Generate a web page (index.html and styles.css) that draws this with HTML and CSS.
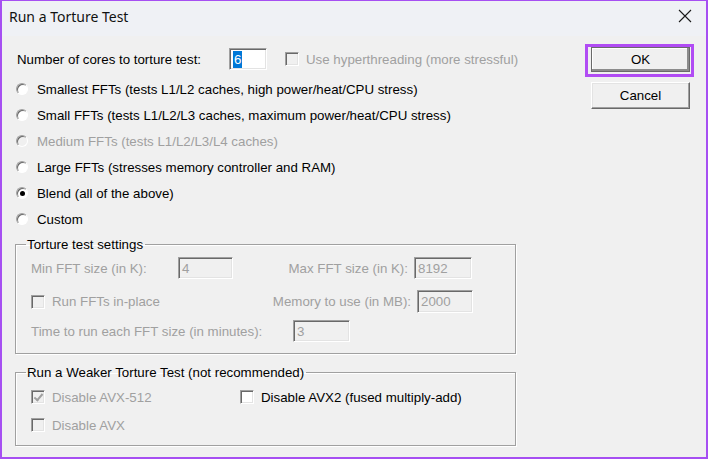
FILE: index.html
```html
<!DOCTYPE html>
<html lang="en">
<head>
  <meta charset="UTF-8">
  <title>Run a Torture Test</title>
  <link rel="stylesheet" href="styles.css">
</head>
<body>
  <div class="window">
    <div class="titlebar">
      <span class="title">Run a Torture Test</span>
      <svg class="close" width="14" height="14" viewBox="0 0 14 14">
        <path d="M1 1 L13 13 M13 1 L1 13" stroke="#1a1a1a" stroke-width="1.1" fill="none"/>
      </svg>
    </div>

    <div class="dialog">
      <div class="main">
        <div class="row cores">
          <span class="cores-label">Number of cores to torture test:</span>
          <span class="field cores-field"><span class="hl">6</span></span>
          <span class="check off ht"></span>
          <span class="dim">Use hyperthreading (more stressful)</span>
        </div>

        <div class="row radio-row"><span class="radio"></span><span>Smallest FFTs (tests L1/L2 caches, high power/heat/CPU stress)</span></div>
        <div class="row radio-row"><span class="radio"></span><span>Small FFTs (tests L1/L2/L3 caches, maximum power/heat/CPU stress)</span></div>
        <div class="row radio-row"><span class="radio off"></span><span class="dim">Medium FFTs (tests L1/L2/L3/L4 caches)</span></div>
        <div class="row radio-row"><span class="radio"></span><span>Large FFTs (stresses memory controller and RAM)</span></div>
        <div class="row radio-row"><span class="radio on"></span><span>Blend (all of the above)</span></div>
        <div class="row radio-row"><span class="radio"></span><span>Custom</span></div>

        <fieldset class="group settings">
          <legend>Torture test settings</legend>
          <div class="set-row row-a">
            <span class="dim w147">Min FFT size (in K):</span>
            <span class="field off w55">4</span>
            <span class="dim right w181">Max FFT size (in K):</span>
            <span class="field off w58">8192</span>
          </div>
          <div class="set-row row-b">
            <span class="w147 box-label"><span class="check off"></span><span class="dim">Run FFTs in-place</span></span>
            <span class="dim right w239">Memory to use (in MB):</span>
            <span class="field off w56 tall">2000</span>
          </div>
          <div class="set-row row-c">
            <span class="dim w262">Time to run each FFT size (in minutes):</span>
            <span class="field off w57">3</span>
          </div>
        </fieldset>

        <fieldset class="group weaker">
          <legend>Run a Weaker Torture Test (not recommended)</legend>
          <div class="weak-row">
            <span class="box-label w209"><span class="check off checked"></span><span class="dim">Disable AVX-512</span></span>
            <span class="box-label"><span class="check"></span><span>Disable AVX2 (fused multiply-add)</span></span>
          </div>
          <div class="weak-row">
            <span class="box-label"><span class="check off"></span><span class="dim">Disable AVX</span></span>
          </div>
        </fieldset>
      </div>

      <div class="buttons">
        <span class="focus"><button class="btn default">OK</button></span>
        <button class="btn">Cancel</button>
      </div>
    </div>
  </div>
</body>
</html>
```

FILE: styles.css
```css
body {
  margin: 0;
  font-family: 'Liberation Sans', Arial, sans-serif;
  font-size: 13.3px;
  color: #000;
}

.window {
  width: 708px;
  height: 459px;
  box-sizing: border-box;
  border: 2px solid #a64ff2;
  border-top-width: 1px;
  background-color: #f0f0f0;
  overflow: hidden;
}

.titlebar {
  height: 35px;
  background-color: #eff1f5;
  display: flex;
  align-items: center;
  justify-content: space-between;
  padding: 0 14px 0 7px;
}

.title {
  font-family: 'Noto Sans', sans-serif;
  font-size: 14px;
  color: #111;
  margin-top: -5px;
}

.close {
  margin-top: -6px;
}

.dialog {
  display: flex;
  padding: 11px 12px 0 13px;
}

.main {
  width: 501px;
  flex-shrink: 0;
}

.row {
  display: flex;
  align-items: center;
  white-space: nowrap;
}

.cores {
  height: 22px;
  margin-top: 1px;
  margin-left: 2px;
  margin-bottom: 6px;
}

.cores-label {
  width: 212px;
  flex-shrink: 0;
}

.cores-field {
  width: 38px;
  height: 22px;
  background-color: #fff;
  padding-left: 3px;
}

.hl {
  background-color: #0078d7;
  color: #fff;
  line-height: 17px;
  padding: 0 1px;
}

.ht {
  margin-left: 18px;
  margin-right: 7px;
}

.radio-row {
  height: 26px;
  padding-left: 1px;
}

.radio {
  width: 12px;
  height: 12px;
  box-sizing: border-box;
  border-radius: 50%;
  border: 1px solid;
  border-color: #a0a0a0 #fff #fff #a0a0a0;
  box-shadow: inset 1px 1px 0 #696969;
  background-color: #fff;
  margin-right: 9px;
  flex-shrink: 0;
  position: relative;
}

.radio.off {
  background-color: #f0f0f0;
}

.radio.on::after {
  content: '';
  position: absolute;
  left: 2.5px;
  top: 2.5px;
  width: 5px;
  height: 5px;
  border-radius: 50%;
  background-color: #000;
}

.dim {
  color: #a0a0a0;
}

.check {
  display: inline-block;
  width: 14px;
  height: 14px;
  box-sizing: border-box;
  border: 1px solid;
  border-color: #a0a0a0 #fff #fff #a0a0a0;
  box-shadow: inset 1px 1px 0 #696969, inset -1px -1px 0 #e3e3e3;
  background-color: #fff;
  flex-shrink: 0;
  position: relative;
}

.check.off {
  background-color: #f0f0f0;
}

.check.checked::after {
  content: '';
  position: absolute;
  left: 4px;
  top: 1px;
  width: 3px;
  height: 7px;
  border: solid #a0a0a0;
  border-width: 0 2px 2px 0;
  transform: rotate(40deg);
}

.field {
  display: inline-flex;
  align-items: center;
  box-sizing: border-box;
  height: 22px;
  border: 1px solid;
  border-color: #a0a0a0 #fff #fff #a0a0a0;
  box-shadow: inset 1px 1px 0 #696969, inset -1px -1px 0 #e3e3e3;
  padding-left: 3px;
  flex-shrink: 0;
}

.field.off {
  background-color: #f0f0f0;
  color: #a0a0a0;
}

.field.tall {
  height: 23px;
}

.group {
  margin: 0;
  padding: 0 0 0 15px;
  border: 1px solid #a0a0a0;
  box-shadow: 1px 1px 0 #fff, inset 1px 1px 0 #fff;
}

.group legend {
  margin-left: -5px;
  padding: 0 2px 0 1px;
  line-height: 15px;
}

.settings {
  margin-top: 5px;
  height: 117px;
  box-sizing: border-box;
}

.set-row {
  display: flex;
  align-items: center;
  white-space: nowrap;
}

.row-a {
  margin-top: 5px;
}

.row-b {
  margin-top: 11px;
}

.row-c {
  margin-top: 7px;
}

.w147 { width: 147px; }
.w55 { width: 55px; }
.w181 { width: 181px; }
.w58 { width: 58px; }
.w239 { width: 239px; }
.w56 { width: 56px; }
.w262 { width: 262px; }
.w57 { width: 57px; }
.w209 { width: 209px; }

.right {
  text-align: right;
  padding-right: 6px;
  box-sizing: border-box;
}

.box-label {
  display: flex;
  align-items: center;
  gap: 7px;
  white-space: nowrap;
}

.weaker {
  margin-top: 11px;
  height: 81px;
  box-sizing: border-box;
}

.weak-row {
  display: flex;
  align-items: center;
  height: 24px;
}

.weak-row + .weak-row {
  margin-top: 4px;
}

.weaker .weak-row:first-of-type {
  margin-top: 5px;
}

.buttons {
  margin-left: auto;
  margin-top: -3px;
  display: flex;
  flex-direction: column;
  align-items: flex-end;
}

.focus {
  display: block;
  border: 3px solid #b14cf4;
  padding: 0 1px 2px 3px;
}

.btn {
  display: block;
  width: 99px;
  height: 26px;
  font-family: 'Liberation Sans', Arial, sans-serif;
  font-size: 13.3px;
  color: #000;
  background-color: #f0f0f0;
  border: 1px solid;
  border-color: #fff #696969 #696969 #fff;
  box-shadow: inset -1px -1px 0 #a0a0a0, inset 1px 1px 0 #e3e3e3;
  padding: 0;
}

.btn.default {
  height: 25px;
  border: 1px solid #6a6a6a;
  box-shadow: inset -2px -2px 0 #8c8c8c, inset 1px 1px 0 #fff;
}

.buttons > .btn {
  margin-top: 5px;
  margin-right: 4px;
  height: 27px;
}
```
